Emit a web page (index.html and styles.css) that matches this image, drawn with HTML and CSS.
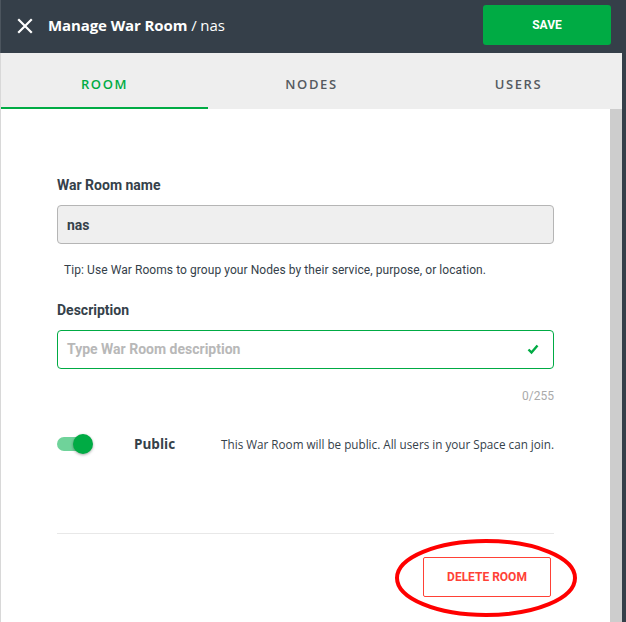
FILE: index.html
```html
<!DOCTYPE html>
<html>
<head>
<meta charset="utf-8">
<link rel="stylesheet" href="styles.css">
</head>
<body>
<header class="header">
  <svg class="close" width="16" height="16" viewBox="0 0 16 16"><path d="M2 2 L14 14 M14 2 L2 14" stroke="#fff" stroke-width="2.2" stroke-linecap="square"/></svg>
  <div class="title"><b>Manage War Room</b> / nas</div>
  <button class="save">SAVE</button>
</header>
<div class="main">
  <div class="panel">
    <nav class="tabs">
      <div class="tab active">ROOM</div>
      <div class="tab">NODES</div>
      <div class="tab">USERS</div>
    </nav>
    <div class="body">
      <div class="content">
        <div class="form">
          <div class="label">War Room name</div>
          <div class="input filled">nas</div>
          <div class="tip">Tip: Use War Rooms to group your Nodes by their service, purpose, or location.</div>
          <div class="label label2">Description</div>
          <div class="input valid">
            <span class="placeholder">Type War Room description</span>
            <svg width="12" height="11" viewBox="0 0 12 11"><path d="M1.5 5.5 L4.5 8.5 L10.5 1.5" stroke="#00ab44" stroke-width="2.4" fill="none"/></svg>
          </div>
          <div class="counter">0/255</div>
          <div class="toggle-row">
            <div class="toggle"><div class="track"></div><div class="knob"></div></div>
            <div class="toggle-label">Public</div>
            <div class="toggle-desc">This War Room will be public. All users in your Space can join.</div>
          </div>
          <div class="divider"></div>
          <div class="actions">
            <button class="delete">DELETE ROOM</button>
          </div>
        </div>
      </div>
      <div class="scrollbar"></div>
    </div>
  </div>
</div>
<svg class="annotation" width="190" height="84" viewBox="0 0 190 84"><ellipse cx="95" cy="42" rx="89" ry="37" fill="none" stroke="#f00" stroke-width="4"/></svg>
</body>
</html>
```
FILE: styles.css
```css
* { box-sizing: border-box; }
html, body { margin: 0; padding: 0; }
body {
  width: 626px;
  height: 622px;
  overflow: hidden;
  background: #353f49;
  font-family: Roboto, "Liberation Sans", sans-serif;
  position: relative;
}
.header {
  height: 53px;
  display: flex;
  align-items: center;
  padding-left: 16px;
  padding-right: 15px;
  border-left: 1px solid #4c555e;
}
.close { flex: none; margin-top: -2px; }
.title {
  margin-left: 15px;
  margin-top: -3px;
  color: #fff;
  font-family: "Open Sans", sans-serif;
  font-size: 15px;
  flex: 1;
  letter-spacing: -0.1px;
}
.title b { font-weight: 700; }
.save {
  width: 128px;
  height: 40px;
  margin-top: -3px;
  background: #00ab44;
  border: none;
  border-radius: 3px;
  color: #fff;
  font-family: Roboto, sans-serif;
  font-weight: 700;
  font-size: 12px;
}
.main { display: flex; height: 569px; }
.panel {
  width: 622px;
  display: flex;
  flex-direction: column;
  border-left: 1px solid #d8d8d8;
}
.tabs {
  height: 56px;
  background: #eeeeee;
  display: flex;
}
.tab {
  flex: 1;
  display: flex;
  align-items: center;
  justify-content: center;
  font-family: "Open Sans", sans-serif;
  font-weight: 600;
  font-size: 13px;
  letter-spacing: 1.6px;
  color: #555a60;
  border-bottom: 2px solid transparent;
  padding-top: 8px;
}
.tab.active { color: #00ab44; border-bottom-color: #00ab44; }
.body { flex: 1; display: flex; }
.content { flex: 1; background: #fff; padding-left: 56px; }
.scrollbar { width: 12px; background: #cdcdcd; }
.form { width: 497px; padding-top: 68px; }
.label {
  font-size: 14px;
  font-weight: 700;
  line-height: 16px;
  color: #35414a;
}
.label2 { margin-top: 24px; }
.input {
  margin-top: 12px;
  height: 39px;
  border-radius: 4px;
  display: flex;
  align-items: center;
  justify-content: space-between;
  padding: 0 14px 0 9px;
  font-size: 14px;
  font-weight: 700;
}
.input.filled { background: #efefef; border: 1px solid #b5b5b5; color: #35414a; }
.input.valid { border: 1px solid #00ab44; padding-bottom: 2px; }
.input.valid svg { margin-top: 2px; }
.placeholder { color: #b8b8b8; }
.tip {
  margin-top: 18px;
  padding-left: 7px;
  font-size: 12px;
  letter-spacing: 0.07px;
  line-height: 16px;
  color: #35414a;
}
.counter {
  margin-top: 19px;
  text-align: right;
  font-size: 12px;
  line-height: 16px;
  color: #aaaaaa;
}
.toggle-row {
  margin-top: 30px;
  height: 20px;
  display: flex;
  align-items: center;
}
.toggle { position: relative; width: 37px; height: 20px; flex: none; }
.track {
  position: absolute; left: 0; top: 3px;
  width: 32px; height: 14px; border-radius: 7px;
  background: #6fd39a;
}
.knob {
  position: absolute; left: 16px; top: 0;
  width: 20px; height: 20px; border-radius: 50%;
  background: #00ab44;
  box-shadow: 0 1px 3px rgba(0,0,0,0.35);
}
.toggle-label {
  margin-left: 40px;
  width: 87px;
  font-family: "Open Sans", sans-serif;
  font-weight: 700;
  font-size: 13.5px;
  color: #35414a;
}
.toggle-desc {
  font-family: "Open Sans", sans-serif;
  font-size: 11.7px;
  color: #35414a;
  white-space: nowrap;
  flex: 1;
  text-align: right;
}
.divider { margin-top: 79px; height: 1px; background: #e8e8e8; }
.actions { display: flex; justify-content: flex-end; padding-right: 3px; margin-top: 23px; }
.delete {
  width: 128px;
  height: 40px;
  background: #fff;
  border: 1px solid #ff4136;
  border-radius: 2px;
  color: #ff4136;
  font-family: Roboto, sans-serif;
  font-weight: 700;
  font-size: 12px;
}
.annotation { position: absolute; left: 391px; top: 536px; }
```
